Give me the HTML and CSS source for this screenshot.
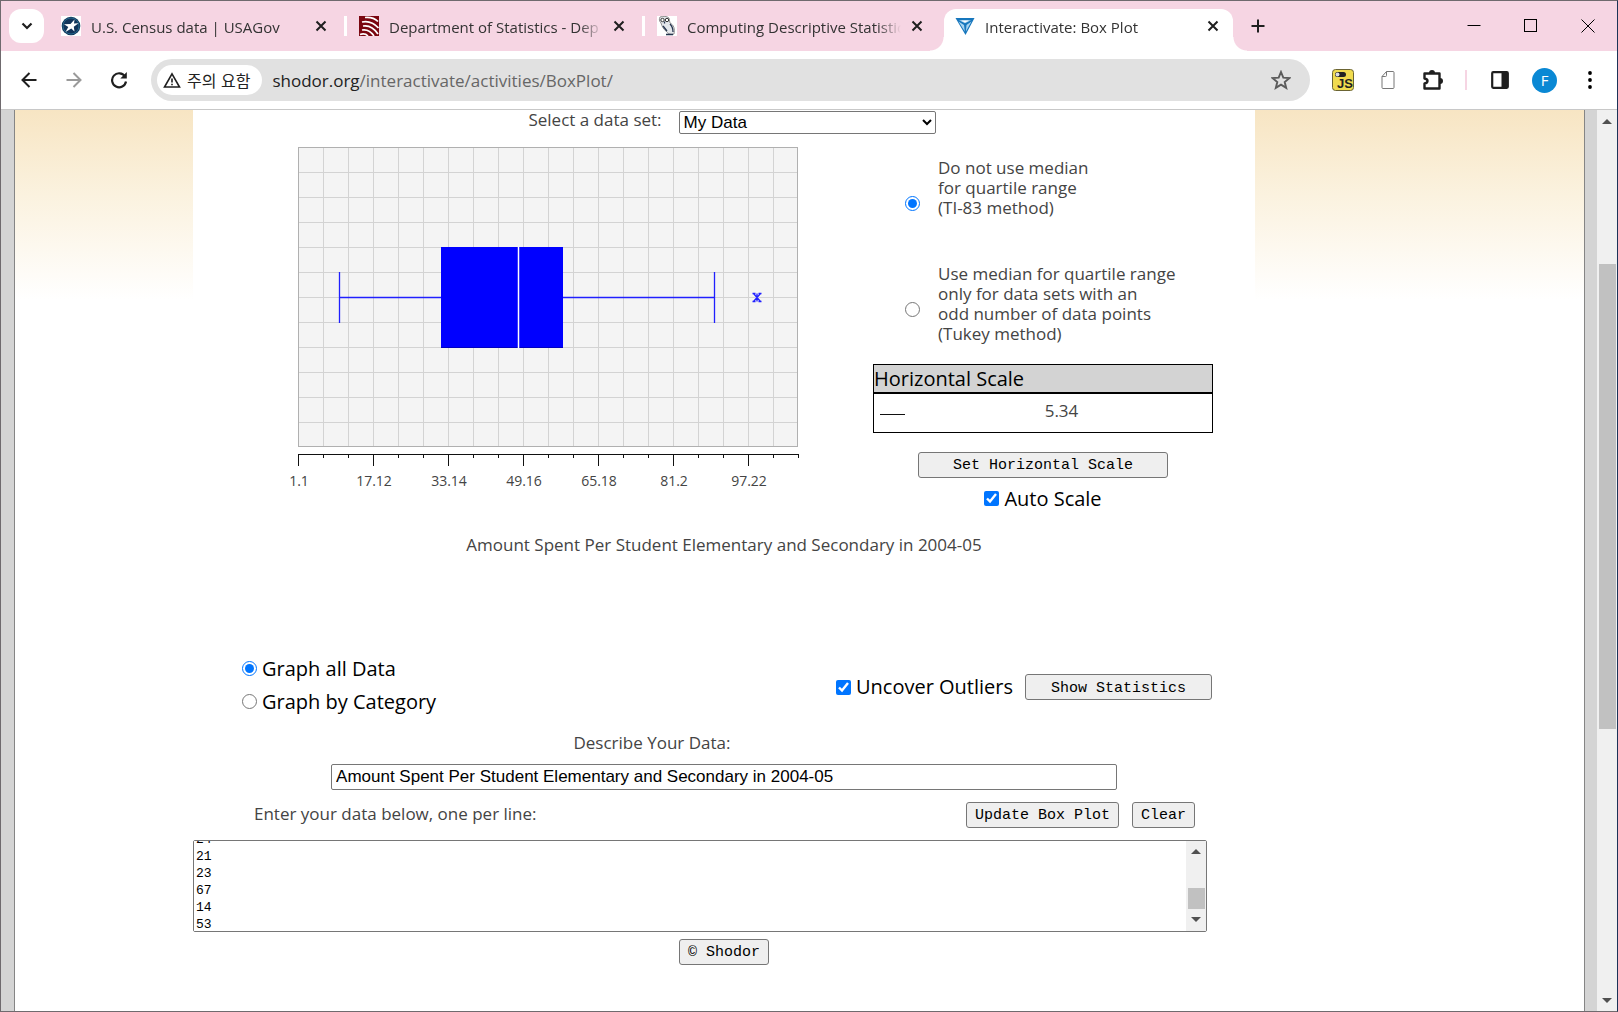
FILE: index.html
```
<!DOCTYPE html>
<html lang="ko">
<head>
    <meta charset="UTF-8">
    <title>Interactivate: Box Plot</title>
    <meta name="viewport" content="width=device-width, initial-scale=1.0">
    <link rel="stylesheet" href="styles.css">
</head>
<body>
    <header class="tabstrip">
        <button class="tab-search" aria-label="Search tabs">
            <svg width="12" height="8" viewBox="0 0 12 8"><path d="M1.500 1.500L6 6l4.500-4.500" fill="none" stroke="#1f1f1f" stroke-width="2.200"/></svg>
        </button>
        <div class="tab">
            <svg class="favicon" viewBox="0 0 20 20"><rect width="20" height="20" fill="#fff"/><circle cx="10" cy="10" r="9.300" fill="#12345a"/><circle cx="10" cy="10" r="8" fill="none" stroke="#2b7b9c" stroke-width=".7"/><path d="M3 8.300l6.500-.3L13.500 3.500l-.5 4 4.500-.2-4.700 3.500.7 4.700-3.200-3-5.800 3.500 2.800-5z" fill="#fff"/></svg>
            <span class="tab-title">U.S. Census data | USAGov</span>
            <button class="tab-close" aria-label="Close tab"><svg width="12" height="12" viewBox="0 0 12 12"><path d="M1.500 1.500l9 9m0-9l-9 9"/></svg></button>
        </div>
        <div class="tab divided">
            <svg class="favicon" viewBox="0 0 20 20"><rect width="20" height="20" fill="#7a0610"/><path d="M6 1.500c6-.5 10 1 13 4M3 6c7-1.500 12 1 16.500 6M4 10c6-1 11 2 15 8M3 14c5-1 9 1.500 12 6M1 18.500c3-1 6-.5 8 1.500" fill="none" stroke="#fff" stroke-width="1.700"/></svg>
            <span class="tab-title">Department of Statistics - Dep</span>
            <button class="tab-close" aria-label="Close tab"><svg width="12" height="12" viewBox="0 0 12 12"><path d="M1.500 1.500l9 9m0-9l-9 9"/></svg></button>
        </div>
        <div class="tab divided">
            <svg class="favicon" viewBox="0 0 20 20"><rect width="20" height="20" fill="#fff"/><path d="M3 1c3-1 7-1 9 1l1 5c4 2 5 6 4 11-3 1-6 0-8-3C6 13 5 10 4 7 2 5 2 3 3 1z" fill="#e3e6ea" stroke="#777" stroke-width=".8"/><circle cx="5.500" cy="4" r="1.700" fill="#fff" stroke="#333"/><circle cx="10" cy="4" r="1.700" fill="#fff" stroke="#333"/><path d="M7.500 5.500v2M13 8c2 2 3 5 3 8M6 10l4 5M9 18.500h7" fill="none" stroke="#26354f" stroke-width="1.300"/></svg>
            <span class="tab-title">Computing Descriptive Statistic</span>
            <button class="tab-close" aria-label="Close tab"><svg width="12" height="12" viewBox="0 0 12 12"><path d="M1.500 1.500l9 9m0-9l-9 9"/></svg></button>
        </div>
        <div class="tab active">
            <svg class="favicon" viewBox="0 0 20 20"><path d="M.5 2h19L10.500 19z" fill="#1777bd"/><path d="M4 4.200h12l-6 3zM3.500 5.500l5.500 3.500.8 6.500zM16.500 5.500L11.500 9l-.6 6.500z" fill="#a9d4f0"/><path d="M6 4.500h8L10 6.500z" fill="#fff"/></svg>
            <span class="tab-title">Interactivate: Box Plot</span>
            <button class="tab-close" aria-label="Close tab"><svg width="12" height="12" viewBox="0 0 12 12"><path d="M1.500 1.500l9 9m0-9l-9 9"/></svg></button>
        </div>
        <button class="new-tab" aria-label="New tab"><svg width="14" height="14" viewBox="0 0 14 14"><path d="M7 .5v13M.5 7h13" stroke="#1f1f1f" stroke-width="2"/></svg></button>
        <div class="window-controls">
            <button aria-label="Minimize"><svg width="14" height="14" viewBox="0 0 14 14"><path d="M.5 6.500h13" stroke="#000"/></svg></button>
            <button aria-label="Maximize"><svg width="14" height="14" viewBox="0 0 14 14"><rect x=".5" y=".5" width="12" height="12" fill="none" stroke="#000"/></svg></button>
            <button aria-label="Close"><svg width="14" height="14" viewBox="0 0 14 14"><path d="M.5.5l13 13m0-13l-13 13" stroke="#000"/></svg></button>
        </div>
    </header>

    <nav class="toolbar">
        <button aria-label="Back"><svg width="18" height="18" viewBox="0 0 18 18"><path d="M16.500 9H3M9.500 2L2.500 9l7 7" fill="none" stroke="#1f1f1f" stroke-width="2"/></svg></button>
        <button aria-label="Forward"><svg width="18" height="18" viewBox="0 0 18 18"><path d="M1.500 9H15M8.500 2l7 7-7 7" fill="none" stroke="#9a9a9a" stroke-width="2"/></svg></button>
        <button aria-label="Reload"><svg width="18" height="18" viewBox="0 0 18 18"><path d="M15 5.500A7 7 0 1 0 16 10.500" fill="none" stroke="#1f1f1f" stroke-width="2.200"/><path d="M16.800 1v6.500h-6.500z" fill="#1f1f1f"/></svg></button>
        <div class="omnibox">
            <button class="chip"><svg width="18" height="16" viewBox="0 0 18 16"><path d="M9 1.800L16.500 15h-15z" fill="none" stroke="#1f1f1f" stroke-width="1.600"/><path d="M9 6.500v4M9 11.800v1.500" stroke="#1f1f1f" stroke-width="1.600"/></svg>주의 요함</button>
            <a class="url" href="#">shodor.org<span>/interactivate/activities/BoxPlot/</span></a>
            <button class="star" aria-label="Bookmark"><svg width="20" height="20" viewBox="0 0 20 20"><path d="M10 2l2.300 5.600 6 .5-4.600 3.900 1.500 5.900L10 14.700l-5.200 3.200L6.300 12 1.700 8.100l6-.5z" fill="none" stroke="#5b5b5b" stroke-width="1.900"/></svg></button>
        </div>
        <button aria-label="Toggle JavaScript"><svg width="22" height="22" viewBox="0 0 22 22"><rect x=".5" y=".5" width="21" height="21" rx="3" fill="#f0db4f" stroke="#6b6433"/><rect x="3" y="3" width="11" height="5" rx="2.500" fill="#222"/><circle cx="5.500" cy="5.500" r="2" fill="#ddd"/><text x="5" y="19" class="js-mark">JS</text></svg></button>
        <button aria-label="Page"><svg width="14" height="18" viewBox="0 0 14 18"><path d="M5.500.5h6.500q1 0 1 1v15q0 1-1 1H2q-1 0-1-1V5.500zM5.500.5v4q0 1-1 1H1" fill="none" stroke="#777"/></svg></button>
        <button aria-label="Extensions"><svg width="22" height="22" viewBox="0 0 22 22"><path d="M2.500 4.500h15v15h-15v-5q3-.5 3-2.500t-3-2.500z" fill="none" stroke="#1f1f1f" stroke-width="2.400" stroke-linejoin="round"/><path d="M7 4a3 3 0 0 1 6 0zM18 9a3 3 0 0 1 0 6z" fill="#1f1f1f"/></svg></button>
        <span class="separator"></span>
        <button aria-label="Side panel"><svg width="18" height="18" viewBox="0 0 18 18"><rect x="1.200" y="1.200" width="15.600" height="15.600" rx="1" fill="#fff" stroke="#1f1f1f" stroke-width="2.200"/><path d="M10.500 1h6.500v16h-6.500z" fill="#1f1f1f"/></svg></button>
        <button aria-label="Profile"><span class="avatar">F</span></button>
        <button aria-label="Menu"><svg width="4" height="18" viewBox="0 0 4 18"><circle cx="2" cy="2" r="1.900"/><circle cx="2" cy="9" r="1.900"/><circle cx="2" cy="16" r="1.900"/></svg></button>
    </nav>

    <div class="viewport">
        <div class="page">
            <div class="band"></div>
            <main class="activity">
                <div class="dataset">
                    <label for="dataset">Select a data set:</label>
                    <select id="dataset"><option>My Data</option></select>
                </div>

                <div class="plot-row">
                    <svg class="plot" viewBox="0 0 520 350" width="520" height="350" role="img" aria-label="Box plot">
                        <defs>
                            <pattern id="grid" x="10" y="0" width="25" height="25" patternUnits="userSpaceOnUse">
                                <path d="M.5 0v25M0 .5h25" stroke="#d3d3d3"/>
                            </pattern>
                        </defs>
                        <rect x="10" y="0" width="500" height="300" fill="#f4f4f4"/>
                        <rect x="10" y="0" width="500" height="300" fill="url(#grid)"/>
                        <rect x="10.500" y=".5" width="499" height="299" fill="none" stroke="#b0b0b0"/>
                        <path d="M51.500 125v51M51.500 150.500h102M274 150.500h152M426.500 125v51" stroke="#2020ff" stroke-width="1.300"/>
                        <rect x="153" y="100" width="122" height="101" fill="#00f"/>
                        <path d="M153 200.500h122" stroke="#0000c0"/>
                        <path d="M230.500 100v101" stroke="#fff" stroke-width="1.500"/>
                        <path d="M465.500 146.500l7 8m0-8l-7 8M469 146.500v8M464.500 146.500h3M470.500 146.500h3M464.500 154.500h3M470.500 154.500h3" stroke="#2020ff" stroke-width="1.300"/>
                        <g id="axis" class="axis"></g>
                    </svg>

                    <div class="options">
                        <div class="method">
                            <input type="radio" name="method" id="ti83" checked>
                            <label for="ti83">Do not use median<br>for quartile range<br>(TI-83 method)</label>
                        </div>
                        <div class="method">
                            <input type="radio" name="method" id="tukey">
                            <label for="tukey">Use median for quartile range<br>only for data sets with an<br>odd number of data points<br>(Tukey method)</label>
                        </div>
                        <table class="scale">
                            <thead><tr><th colspan="2">Horizontal Scale</th></tr></thead>
                            <tbody><tr><td><span class="unit"></span></td><td class="value">5.34</td></tr></tbody>
                        </table>
                        <button class="btn set-scale">Set Horizontal Scale</button>
                        <label class="check"><input type="checkbox" checked>Auto Scale</label>
                    </div>
                </div>

                <p class="caption">Amount Spent Per Student Elementary and Secondary in 2004-05</p>

                <div class="graph-row">
                    <div class="graph-mode">
                        <label class="check"><input type="radio" name="mode" checked>Graph all Data</label>
                        <label class="check"><input type="radio" name="mode">Graph by Category</label>
                    </div>
                    <div class="stats">
                        <label class="check"><input type="checkbox" checked>Uncover Outliers</label>
                        <button class="btn show-stats">Show Statistics</button>
                    </div>
                </div>

                <div class="describe">
                    <label for="describe">Describe Your Data:</label>
                    <input type="text" id="describe" value="Amount Spent Per Student Elementary and Secondary in 2004-05">
                </div>

                <div class="enter-row">
                    <label for="data">Enter your data below, one per line:</label>
                    <button class="btn">Update Box Plot</button>
                    <button class="btn">Clear</button>
                </div>

                <div class="data-box">
                    <textarea id="data">24
21
23
67
14
53</textarea>
                    <div class="scrollbar">
                        <svg width="20" height="20" viewBox="0 0 20 20"><path d="M5 13h10l-5-5z"/></svg>
                        <div class="thumb data-thumb"></div>
                        <svg width="20" height="20" viewBox="0 0 20 20"><path d="M5 6h10l-5 5z"/></svg>
                    </div>
                </div>

                <button class="btn shodor">© Shodor</button>
            </main>
            <div class="band"></div>
        </div>
        <div class="scrollbar">
            <svg width="20" height="20" viewBox="0 0 20 20"><path d="M5 14h10l-5-5z"/></svg>
            <div class="track"><div class="thumb page-thumb"></div></div>
            <svg width="20" height="20" viewBox="0 0 20 20"><path d="M5 7h10l-5 5z"/></svg>
        </div>
    </div>

    <script>
      var axis = document.getElementById('axis'),
        data = document.getElementById('data'),
        labels = ['1.1', '17.12', '33.14', '49.16', '65.18', '81.2', '97.22'],
        ticks = '';

      for (var i = 0; i <= 20; i++) {
        ticks += `M${10.5 + i * 25} 307v${i % 3 ? 4 : 12}`;
      }

      axis.innerHTML = `<path d="M10 307.5h501${ticks}"/>` + labels.map(function (text, n) {
        return `<text x="${11 + n * 75}" y="339">${text}</text>`;
      }).join('');

      data.scrollTop = 10;
    </script>
</body>
</html>
```

FILE: styles.css
```
* {
    box-sizing: border-box;
}

html {
    height: 100%;
}

body {
    display: flex;
    flex-direction: column;
    height: 100%;
    margin: 0;
    overflow: hidden;
    border: 1px solid #6f6a6e;
    border-right-color: #1c3358;
    background: #fff;
    font-family: "Open Sans", "Noto Sans CJK KR", sans-serif;
    font-size: 17px;
    color: #444;
}

button,
input,
select,
textarea {
    margin: 0;
    font: inherit;
}

svg {
    display: block;
    flex: none;
}

/* tab strip */

.tabstrip {
    display: flex;
    flex: none;
    height: 50px;
    padding: 8px 1px 0 8px;
    background: #f6d5e3;
}

.tabstrip button,
.toolbar button {
    display: flex;
    flex: none;
    align-items: center;
    justify-content: center;
    padding: 0;
    border: 0;
    background: none;
}

.tabstrip .tab-search {
    width: 35px;
    height: 34px;
    margin-right: 6px;
    border-radius: 12px;
    background: #fff;
}

.tab {
    position: relative;
    display: flex;
    flex: 0 1 298px;
    min-width: 0;
    height: 34px;
    align-items: center;
    gap: 10px;
    padding: 0 21px 0 11px;
    color: #333;
    font-size: 15px;
}

.tab.divided::before {
    content: "";
    position: absolute;
    left: -4px;
    width: 3px;
    height: 20px;
    background: #fff;
}

.tab.active {
    flex-basis: 289px;
    height: 42px;
    padding-bottom: 8px;
    padding-right: 14px;
    border-radius: 12px 12px 0 0;
    background: #fff;
}

/* flared feet of the active tab */
.tab.active::before,
.tab.active::after {
    content: "";
    position: absolute;
    bottom: 0;
    width: 14px;
    height: 14px;
}

.tab.active::before {
    left: -14px;
    background: radial-gradient(circle at 0 0, transparent 13px, #fff 14px);
}

.tab.active::after {
    right: -14px;
    background: radial-gradient(circle at 100% 0, transparent 13px, #fff 14px);
}

.favicon {
    width: 20px;
    height: 20px;
}

.tab-title {
    flex: 1;
    padding-top: 2px;
    overflow: hidden;
    white-space: nowrap;
    -webkit-mask-image: linear-gradient(to right, #000 calc(100% - 24px), transparent);
    mask-image: linear-gradient(to right, #000 calc(100% - 24px), transparent);
}

.tab-close path {
    stroke: #1f1f1f;
    stroke-width: 2;
}

.new-tab {
    width: 50px;
    height: 34px;
}

.window-controls {
    display: flex;
    height: 34px;
    margin-left: auto;
}

.window-controls button {
    width: 57px;
}

/* toolbar */

.toolbar {
    display: flex;
    flex: none;
    align-items: center;
    height: 59px;
    padding: 0 5px;
    border-bottom: 1px solid #c8c8c8;
    background: #fff;
}

.toolbar > button {
    width: 45px;
}

.omnibox {
    display: flex;
    flex: 1;
    align-items: center;
    height: 42px;
    margin: 0 10px;
    padding: 0 19px 0 6px;
    border-radius: 21px;
    background: #e1e1e1;
}

.toolbar .chip {
    gap: 6px;
    height: 30px;
    margin-right: 10px;
    padding: 0 12px 0 6px;
    border-radius: 15px;
    background: #fff;
    color: #222;
    font-family: "Noto Sans CJK KR", sans-serif;
    font-size: 16px;
}

.url {
    flex: 1;
    color: #222;
    text-decoration: none;
}

.url span {
    color: #666;
}

.js-mark {
    fill: #222;
    font: bold 13px "Liberation Sans", sans-serif;
}

.separator {
    width: 2px;
    height: 20px;
    margin: 0 10px;
    background: #f6d5e3;
}

.avatar {
    width: 25px;
    border-radius: 50%;
    background: #0a88d4;
    color: #fff;
    font-size: 15px;
    line-height: 25px;
}

/* page */

.viewport {
    display: flex;
    flex: 1;
    min-height: 0;
}

.page {
    display: grid;
    flex: 1;
    grid-template-columns: 178fr 1062fr 329fr;
    border: solid #d4d4d4;
    border-width: 0 12px 0 13px;
    box-shadow: inset 1px 0 #858585, inset -1px 0 #858585;
    padding: 0 1px;
}

.band {
    height: 190px;
    background: linear-gradient(#f7e5c3, #fbf2df 45%, #fff);
}

.activity {
    display: flex;
    flex-direction: column;
    min-width: 0;
}

.dataset {
    display: flex;
    justify-content: center;
    gap: 17px;
    height: 37px;
    padding-left: 16px;
}

.dataset label {
    line-height: 20px;
}

.dataset select {
    width: 257px;
    height: 23px;
    margin-top: 1px;
    border: 1px solid #767676;
    border-radius: 2px;
    background: #fff;
    color: #000;
    font: 17px "Liberation Sans", sans-serif;
}

.plot-row {
    display: flex;
    justify-content: space-between;
    padding: 0 42px 0 95px;
}

.axis path {
    stroke: #111;
}

.axis text {
    fill: #444;
    font-size: 14px;
    text-anchor: middle;
}

.options {
    display: flex;
    flex-direction: column;
    align-items: center;
    width: 340px;
    padding-top: 10px;
}

.method {
    display: flex;
    align-items: center;
    align-self: flex-start;
    height: 92px;
    gap: 18px;
    padding-left: 32px;
    margin-bottom: 14px;
    line-height: 20px;
}

.method label {
    height: 90px;
}

input[type="radio"],
input[type="checkbox"] {
    flex: none;
    width: 15px;
    height: 15px;
    accent-color: #0075ff;
}

.scale {
    width: 100%;
    margin-top: -5px;
    border: 1px solid #000;
    border-collapse: collapse;
    line-height: 27px;
}

.scale th {
    padding: 0;
    border-bottom: 2px solid #000;
    background: #d3d3d3;
    color: #000;
    font-size: 20px;
    font-weight: normal;
    text-align: left;
}

.scale td {
    height: 39px;
    padding: 3px 6px 0;
}

.scale .value {
    width: 90%;
    padding: 0 0 4px;
    text-align: center;
}

.unit {
    display: block;
    width: 25px;
    height: 1px;
    background: #111;
}

.btn {
    height: 26px;
    padding: 2px 8px 0;
    border: 1px solid #767676;
    border-radius: 3px;
    background: #efefef;
    color: #000;
    font: 15px "Liberation Mono", monospace;
}

.set-scale {
    width: 250px;
    margin: 19px 0 8px;
}

.check {
    display: flex;
    align-items: center;
    gap: 5px;
    color: #000;
    font-size: 20px;
    line-height: 26px;
}

.caption {
    margin: 21px 0 0;
    line-height: 24px;
    text-align: center;
}

.graph-row {
    display: flex;
    align-items: center;
    justify-content: space-between;
    margin-top: 99px;
    padding: 0 43px 0 49px;
}

.graph-mode {
    display: grid;
    gap: 7px;
}

.stats {
    display: flex;
    align-items: center;
    gap: 12px;
    padding-top: 4px;
}

.show-stats {
    width: 187px;
}

.describe {
    display: flex;
    flex-direction: column;
    align-items: center;
    margin-top: 16px;
    line-height: 24px;
}

.describe label {
    margin-right: 144px;
}

.describe input {
    width: 74%;
    height: 26px;
    margin-top: 9px;
    padding: 0 4px;
    border: 1px solid #767676;
    border-radius: 2px;
    color: #000;
    font: 17px "Liberation Sans", sans-serif;
}

.enter-row {
    display: flex;
    align-items: center;
    gap: 13px;
    margin-top: 12px;
    padding: 0 60px 0 61px;
}

.enter-row label {
    flex: 1;
    padding-bottom: 3px;
}

.data-box {
    display: flex;
    height: 92px;
    margin: 12px 48px 0 0;
    border: 1px solid #767676;
    border-radius: 2px;
}

.data-box textarea {
    flex: 1;
    padding: 0 2px;
    overflow: hidden;
    border: 0;
    resize: none;
    color: #000;
    font: 13px/17px "Liberation Mono", monospace;
}

.shodor {
    align-self: center;
    margin-top: 7px;
}

.scrollbar {
    display: flex;
    flex: none;
    flex-direction: column;
    justify-content: space-between;
    width: 20px;
    background: #f0f0f0;
    fill: #505050;
}

.thumb {
    width: 17px;
    margin: 0 auto;
    background: #c1c1c1;
}

.data-thumb {
    height: 21px;
    margin-top: auto;
    margin-bottom: 2px;
}

.track {
    flex: 1;
}

.page-thumb {
    height: 54%;
    margin-top: 134px;
}
```
